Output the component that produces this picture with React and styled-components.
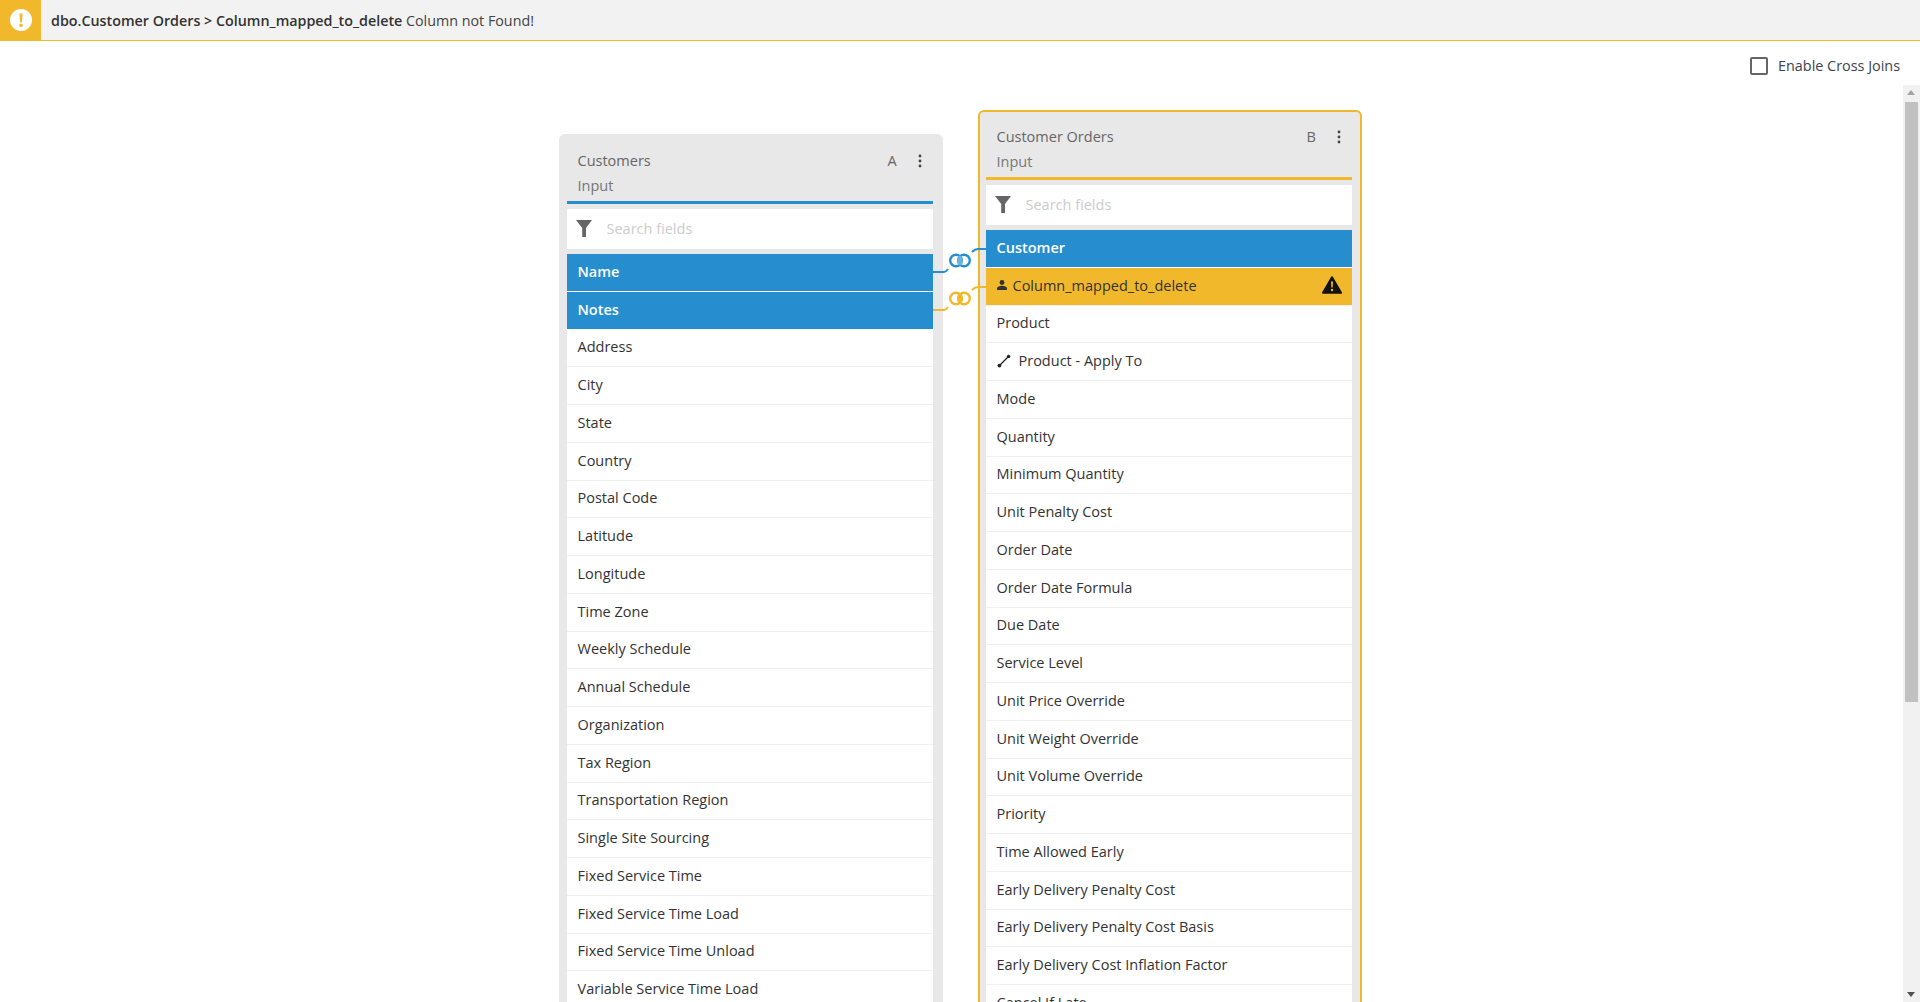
import React from "react";
import styled, { createGlobalStyle } from "styled-components";

const BLUE = "#268dcf";
const YELLOW = "#f2b82c";

const GlobalStyle = createGlobalStyle`
  html, body {
    margin: 0;
    height: 100%;
    overflow: hidden;
    background: #fff;
  }
  body {
    font-family: "Open Sans", "Liberation Sans", sans-serif;
    font-size: 14.5px;
    color: #333;
  }
`;

const Page = styled.div`
  height: 1002px;
  display: flex;
  flex-direction: column;
  overflow: hidden;
`;

const AlertBar = styled.div`
  flex: none;
  height: 41px;
  box-sizing: border-box;
  display: flex;
  align-items: center;
  background: #f2f2f2;
  border-bottom: 1px solid ${YELLOW};
`;

const AlertBadge = styled.div`
  width: 41px;
  height: 40px;
  display: flex;
  align-items: center;
  justify-content: center;
  background: ${YELLOW};
`;

const AlertText = styled.div`
  margin-left: 10px;
  font-size: 14.3px;
  color: #444;
  b {
    font-weight: 600;
    color: #333;
  }
`;

const Toolbar = styled.div`
  flex: none;
  height: 44px;
  box-sizing: border-box;
  padding: 5px 20px 0 0;
  display: flex;
  align-items: center;
  justify-content: flex-end;
`;

const CheckLabel = styled.label`
  display: flex;
  align-items: center;
  gap: 10px;
  font-size: 14.4px;
  color: #3d4450;
`;

const CheckBox = styled.span`
  width: 18px;
  height: 18px;
  box-sizing: border-box;
  border: 2px solid #666;
  border-radius: 2px;
`;

const Canvas = styled.div`
  flex: 1;
  position: relative;
  min-height: 0;
  overflow: hidden;
`;

const Board = styled.div`
  display: flex;
  justify-content: center;
  align-items: flex-start;
  padding-top: 25px;
`;

const Card = styled.section`
  width: 384px;
  flex: none;
  box-sizing: border-box;
  margin-top: ${p => p.$offset || 0}px;
  padding: 0 8px 0 6px;
  background: #e8e8e8;
  border: 2px solid ${p => (p.$active ? YELLOW : "#e8e8e8")};
  border-radius: 6px;
`;

const CardHead = styled.header`
  height: 68px;
  box-sizing: border-box;
  padding: 11px 0 0 11px;
  border-bottom: 3px solid ${p => p.$color};
  color: #666;
`;

const TitleRow = styled.div`
  height: 26px;
  display: flex;
  align-items: center;
`;

const Title = styled.div`
  flex: 1;
`;

const Letter = styled.span`
  width: 30px;
`;

const Kebab = styled.span`
  width: 4px;
  display: flex;
  margin: 2px 11px 0 0;
`;

const SubTitle = styled.div`
  line-height: 26px;
  color: #777;
`;

const SearchBox = styled.div`
  height: 40px;
  margin: 5px 0;
  box-sizing: border-box;
  padding: 0 0 2px 9px;
  display: flex;
  align-items: center;
  background: #fff;
  color: #ccc;
`;

const SearchText = styled.span`
  margin-left: 15px;
`;

const FieldList = styled.ul`
  list-style: none;
  margin: 0;
  padding: 0;
`;

const Field = styled.li`
  height: 37.75px;
  box-sizing: border-box;
  display: flex;
  align-items: center;
  padding: 0 10px 2px 11px;
  background: ${p => (p.$state === "mapped" ? BLUE : p.$state === "error" ? YELLOW : "#fff")};
  color: ${p => (p.$state === "mapped" ? "#fff" : "#333")};
  font-weight: ${p => (p.$state === "mapped" ? 600 : 400)};
  border-bottom: 1px solid ${p => (p.$state === "mapped" ? "#fff" : "#f0f0f0")};
`;

const FieldIcon = styled.span`
  display: flex;
  margin-right: ${p => p.$gap}px;
`;

const FieldName = styled.span`
  flex: 1;
`;

const Gutter = styled.div`
  width: 35px;
  flex: none;
  position: relative;
  align-self: stretch;
  z-index: 2;
`;

const Links = styled.svg`
  position: absolute;
  left: -10px;
  top: 0;
`;

const ScrollTrack = styled.div`
  position: absolute;
  top: 0;
  right: 0;
  bottom: 0;
  width: 17px;
  background: #f1f1f1;
  z-index: 3;
`;

const ScrollThumb = styled.div`
  position: absolute;
  top: 17px;
  left: 2px;
  width: 13px;
  height: 600px;
  background: #c1c1c1;
`;

const ScrollArrow = styled.div`
  position: absolute;
  left: 4px;
  ${p => (p.$down ? "bottom: 5px;" : "top: 5px;")}
  width: 0;
  height: 0;
  border-left: 4.5px solid transparent;
  border-right: 4.5px solid transparent;
  ${p => (p.$down ? "border-top: 5px solid #505050;" : "border-bottom: 5px solid #a3a3a3;")}
`;

const AlertIcon = () => (
  <svg width="22" height="22" viewBox="0 0 20 20">
    <circle cx="10" cy="10" r="10" fill="#fff" />
    <path d="M8.6 4h2.800l-.5 8H9.100z" fill={YELLOW} />
    <circle cx="10" cy="14.800" r="1.600" fill={YELLOW} />
  </svg>
);

const FilterIcon = () => (
  <svg width="16" height="17" viewBox="0 0 16 17">
    <path d="M0 0h16L10 8v9H6.200V8z" fill="#666" />
  </svg>
);

const DotsIcon = () => (
  <svg width="4" height="14" viewBox="0 0 4 14">
    <circle cx="2" cy="2" r="1.400" fill="#444" />
    <circle cx="2" cy="7" r="1.400" fill="#444" />
    <circle cx="2" cy="12" r="1.400" fill="#444" />
  </svg>
);

const PersonIcon = () => (
  <svg width="10" height="10" viewBox="0 0 10 10">
    <circle cx="5" cy="2.500" r="2.400" fill="#333" />
    <path d="M0 10V8.400C0 6.600 2.600 5.800 5 5.800s5 .8 5 2.600V10z" fill="#333" />
  </svg>
);

const LinkIcon = () => (
  <svg width="14" height="14" viewBox="0 0 14 14">
    <path d="M2.500 11.500l9-9" stroke="#222" strokeWidth="1.300" />
    <circle cx="2.400" cy="11.600" r="1.900" fill="#222" />
    <circle cx="11.600" cy="2.400" r="1.700" fill="#222" />
  </svg>
);

const WarnIcon = () => (
  <svg width="20" height="18" viewBox="0 0 20 18">
    <path d="M10 1.200L19 16.800H1z" fill="#111" stroke="#111" strokeWidth="2" strokeLinejoin="round" />
    <path d="M9 5.500h2l-.3 6H9.300z" fill={YELLOW} />
    <circle cx="10" cy="14" r="1.200" fill={YELLOW} />
  </svg>
);

const Connector = ({ leftY, rightY, color, fill }) => (
  <g>
    <path d={`M0 ${leftY}h11q2 0 4 -3`} fill="none" stroke={color} strokeWidth="2" />
    <path d={`M39 ${rightY + 3}q3 -3 6 -3h8`} fill="none" stroke={color} strokeWidth="2" />
    <circle cx="23" cy={rightY + 11.500} r="5.800" fill="none" stroke={color} strokeWidth="2.400" />
    <circle cx="31" cy={rightY + 11.500} r="5.800" fill="none" stroke={color} strokeWidth="2.400" />
    <ellipse cx="27" cy={rightY + 11.500} rx="2.600" ry="5" fill={fill} />
  </g>
);

const leftFields = [
  { name: "Name", state: "mapped" },
  { name: "Notes", state: "mapped" },
  { name: "Address" },
  { name: "City" },
  { name: "State" },
  { name: "Country" },
  { name: "Postal Code" },
  { name: "Latitude" },
  { name: "Longitude" },
  { name: "Time Zone" },
  { name: "Weekly Schedule" },
  { name: "Annual Schedule" },
  { name: "Organization" },
  { name: "Tax Region" },
  { name: "Transportation Region" },
  { name: "Single Site Sourcing" },
  { name: "Fixed Service Time" },
  { name: "Fixed Service Time Load" },
  { name: "Fixed Service Time Unload" },
  { name: "Variable Service Time Load" },
];

const rightFields = [
  { name: "Customer", state: "mapped" },
  { name: "Column_mapped_to_delete", state: "error", icon: "person" },
  { name: "Product" },
  { name: "Product - Apply To", icon: "link" },
  { name: "Mode" },
  { name: "Quantity" },
  { name: "Minimum Quantity" },
  { name: "Unit Penalty Cost" },
  { name: "Order Date" },
  { name: "Order Date Formula" },
  { name: "Due Date" },
  { name: "Service Level" },
  { name: "Unit Price Override" },
  { name: "Unit Weight Override" },
  { name: "Unit Volume Override" },
  { name: "Priority" },
  { name: "Time Allowed Early" },
  { name: "Early Delivery Penalty Cost" },
  { name: "Early Delivery Penalty Cost Basis" },
  { name: "Early Delivery Cost Inflation Factor" },
  { name: "Cancel If Late" },
];

const FieldRow = ({ field }) => (
  <Field $state={field.state}>
    {field.icon === "person" && <FieldIcon $gap={6}><PersonIcon /></FieldIcon>}
    {field.icon === "link" && <FieldIcon $gap={8}><LinkIcon /></FieldIcon>}
    <FieldName>{field.name}</FieldName>
    {field.state === "error" && <WarnIcon />}
  </Field>
);

const TableCard = ({ title, letter, color, fields, offset, active }) => (
  <Card $offset={offset} $active={active}>
    <CardHead $color={color}>
      <TitleRow>
        <Title>{title}</Title>
        <Letter>{letter}</Letter>
        <Kebab><DotsIcon /></Kebab>
      </TitleRow>
      <SubTitle>Input</SubTitle>
    </CardHead>
    <SearchBox>
      <FilterIcon />
      <SearchText>Search fields</SearchText>
    </SearchBox>
    <FieldList>
      {fields.map(f => <FieldRow field={f} key={f.name} />)}
    </FieldList>
  </Card>
);

export default function App() {
  return (
    <Page>
      <GlobalStyle />
      <AlertBar>
        <AlertBadge><AlertIcon /></AlertBadge>
        <AlertText>
          <b>dbo.Customer Orders &gt; Column_mapped_to_delete</b> Column not Found!
        </AlertText>
      </AlertBar>
      <Toolbar>
        <CheckLabel>
          <CheckBox />
          Enable Cross Joins
        </CheckLabel>
      </Toolbar>
      <Canvas>
        <Board>
          <TableCard
            title="Customers"
            letter="A"
            color={BLUE}
            fields={leftFields}
            offset={24}
          />
          <Gutter>
            <Links width="53" height="240" viewBox="0 0 53 240">
              <Connector leftY={162} rightY={139} color={BLUE} fill="#6bb3e0" />
              <Connector leftY={200} rightY={177} color={YELLOW} fill={YELLOW} />
            </Links>
          </Gutter>
          <TableCard
            title="Customer Orders"
            letter="B"
            color={YELLOW}
            fields={rightFields}
            active
          />
        </Board>
        <ScrollTrack>
          <ScrollArrow />
          <ScrollThumb />
          <ScrollArrow $down />
        </ScrollTrack>
      </Canvas>
    </Page>
  );
}
